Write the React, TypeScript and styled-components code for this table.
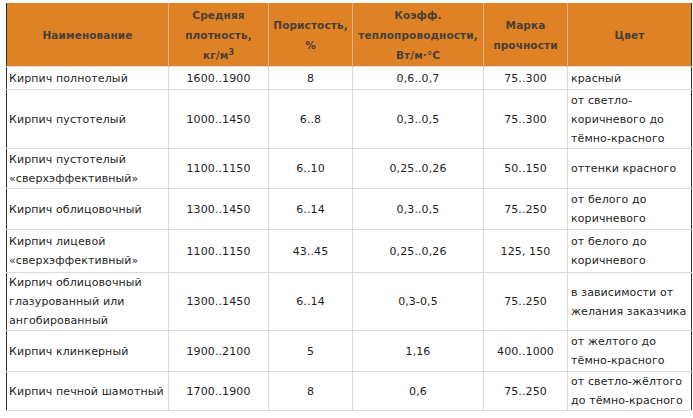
import React from "react";
import styled, { createGlobalStyle } from "styled-components";

const Global = createGlobalStyle`
  html, body { margin: 0; padding: 0; background: #ffffff; }
  body { font-family: "DejaVu Sans", Verdana, sans-serif; }
`;

const Page = styled.div`
  padding: 3px 3px 0 6px;
`;

const Table = styled.table`
  width: 685px;
  border-collapse: collapse;
  table-layout: fixed;
  border-left: 1px solid #2e2e2e;
  border-right: 1px solid #2e2e2e;
  border-bottom: 1px solid #2e2e2e;
  font-size: 11px;
  color: #1e1e1e;
`;

const HeadCell = styled.th`
  background: #df8226;
  color: #4a3f36;
  font-weight: bold;
  font-size: 10.5px;
  line-height: 20px;
  letter-spacing: 0.1px;
  text-align: center;
  vertical-align: middle;
  white-space: nowrap;
  padding: 0;
  height: 63px;
  border-left: 1px solid #eab27c;
  &:first-child { border-left: none; }
`;

const Sup = styled.sup`
  font-size: 8px;
  line-height: 0;
`;

const Row = styled.tr<{ $h: number }>`
  height: ${(p) => p.$h}px;
`;

const Cell = styled.td<{ $left?: boolean }>`
  border: 1px solid #d9d9d9;
  padding: 0 2px;
  text-align: ${(p) => (p.$left ? "left" : "center")};
  vertical-align: middle;
  white-space: nowrap;
  line-height: 19px;
  letter-spacing: 0.1px;
  &:first-child { border-left: none; }
  &:last-child { border-right: none; padding-left: 3px; }
`;

type R = { h: number; name: string; dens: string; por: string; k: string; m: string; c: string };

const rows: R[] = [
  { h: 23, name: "Кирпич полнотелый", dens: "1600..1900", por: "8", k: "0,6..0,7", m: "75..300", c: "красный" },
  { h: 59, name: "Кирпич пустотелый", dens: "1000..1450", por: "6..8", k: "0,3..0,5", m: "75..300", c: "от светло-\nкоричневого до\nтёмно-красного" },
  { h: 40, name: "Кирпич пустотелый\n«сверхэффективный»", dens: "1100..1150", por: "6..10", k: "0,25..0,26", m: "50..150", c: "оттенки красного" },
  { h: 41, name: "Кирпич облицовочный", dens: "1300..1450", por: "6..14", k: "0,3..0,5", m: "75..250", c: "от белого до\nкоричневого" },
  { h: 43, name: "Кирпич лицевой\n«сверхэффективный»", dens: "1100..1150", por: "43..45", k: "0,25..0,26", m: "125, 150", c: "от белого до\nкоричневого" },
  { h: 58, name: "Кирпич облицовочный\nглазурованный или\nангобированный", dens: "1300..1450", por: "6..14", k: "0,3-0,5", m: "75..250", c: "в зависимости от\nжелания заказчика" },
  { h: 41, name: "Кирпич клинкерный", dens: "1900..2100", por: "5", k: "1,16", m: "400..1000", c: "от желтого до\nтёмно-красного" },
  { h: 37, name: "Кирпич печной шамотный", dens: "1700..1900", por: "8", k: "0,6", m: "75..250", c: "от светло-жёлтого\nдо тёмно-красного" },
];

const Lines: React.FC<{ text: string }> = ({ text }) => (
  <>
    {text.split("\n").map((t, i, a) => (
      <React.Fragment key={i}>
        {t}
        {i < a.length - 1 && <br />}
      </React.Fragment>
    ))}
  </>
);

export default function App() {
  return (
    <>
      <Global />
      <Page>
        <Table>
          <colgroup>
            <col style={{ width: 162 }} />
            <col style={{ width: 100 }} />
            <col style={{ width: 84 }} />
            <col style={{ width: 131 }} />
            <col style={{ width: 84 }} />
            <col style={{ width: 124 }} />
          </colgroup>
          <thead>
            <tr>
              <HeadCell>Наименование</HeadCell>
              <HeadCell>
                Средняя<br />плотность,<br />кг/м<Sup>3</Sup>
              </HeadCell>
              <HeadCell>
                Пористость,<br />%
              </HeadCell>
              <HeadCell>
                Коэфф.<br />теплопроводности,<br />Вт/м·°С
              </HeadCell>
              <HeadCell>
                Марка<br />прочности
              </HeadCell>
              <HeadCell>Цвет</HeadCell>
            </tr>
          </thead>
          <tbody>
            {rows.map((r, i) => (
              <Row key={i} $h={r.h}>
                <Cell $left><Lines text={r.name} /></Cell>
                <Cell>{r.dens}</Cell>
                <Cell>{r.por}</Cell>
                <Cell>{r.k}</Cell>
                <Cell>{r.m}</Cell>
                <Cell $left><Lines text={r.c} /></Cell>
              </Row>
            ))}
          </tbody>
        </Table>
      </Page>
    </>
  );
}
